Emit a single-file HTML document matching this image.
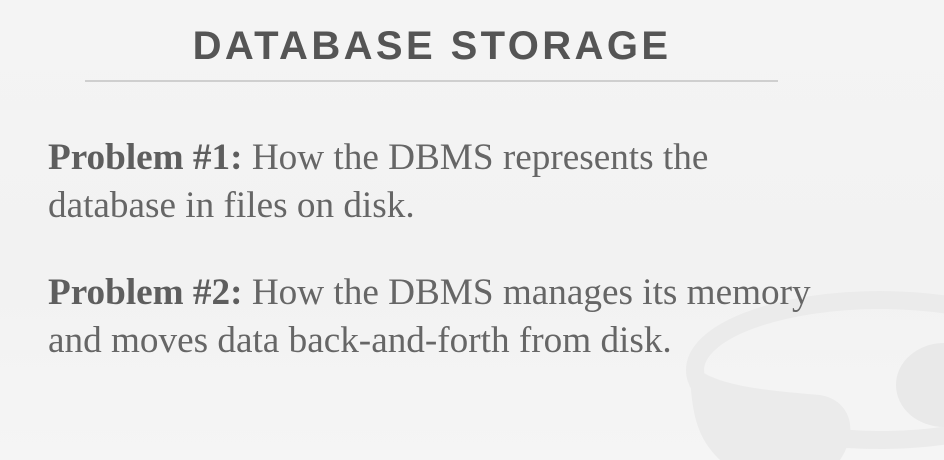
<!DOCTYPE html>
<html><head><meta charset="utf-8"><style>
html,body{margin:0;padding:0}
body{width:944px;height:460px;overflow:hidden;position:relative;background:linear-gradient(180deg,#f4f4f4 0%,#f2f2f2 60%,#f5f5f5 100%);}
.t{position:absolute;left:0;width:864px;top:24px;text-align:center;font-family:"Liberation Sans",sans-serif;font-weight:bold;font-size:40px;letter-spacing:3.4px;color:#555;}
.hr{position:absolute;left:85px;width:693px;top:80px;height:2px;background:#cfcfcf;}
.p{position:absolute;left:48px;font-family:"Liberation Serif",serif;font-size:37.2px;color:#666;line-height:48px;}
.p b{color:#5e5e5e}
</style></head><body>
<svg style="position:absolute;left:0;top:0" width="944" height="460">
<ellipse cx="880" cy="370" rx="185" ry="70" fill="none" stroke="#ebebeb" stroke-width="18"/>
<path d="M690 360 C690 420 700 440 720 460 L840 460 C860 430 850 400 820 395 C760 390 705 385 690 360 Z" fill="#ebebeb"/>
<ellipse cx="944" cy="385" rx="48" ry="42" fill="#e9e9e9"/>
</svg>
<div class="t">DATABASE STORAGE</div>
<div class="hr"></div>
<div class="p" style="top:134px"><b>Problem #1:</b> How the DBMS represents the<br>database in files on disk.</div>
<div class="p" style="top:269px"><b>Problem #2:</b> How the DBMS manages its memory<br>and moves data back-and-forth from disk.</div>
</body></html>
